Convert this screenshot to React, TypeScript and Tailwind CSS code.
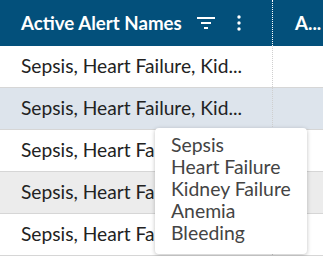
import React from "react";

const rows = [
  "bg-white",
  "bg-[#dde4ec]",
  "bg-white",
  "bg-[#ececec]",
  "bg-white",
];

export default function App() {
  return (
    <div className="relative w-[323px] h-[256px] overflow-hidden bg-white font-['Lato',sans-serif]">
      <div className="flex h-[46px] bg-[#03507b] text-white">
        <div className="flex items-center w-[273px] pl-[21px] border-r border-dotted border-white">
          <span className="text-[18.7px] font-bold whitespace-nowrap">Active Alert Names</span>
          <svg className="ml-[15px] shrink-0" width="18" height="14" viewBox="0 0 18 14">
            <rect x="0" y="1" width="18" height="2" fill="white" />
            <rect x="4" y="6" width="10" height="2" fill="white" />
            <rect x="7" y="11" width="4" height="2" fill="white" />
          </svg>
          <svg className="ml-[22px] shrink-0" width="4" height="16" viewBox="0 0 4 16">
            <circle cx="2" cy="2" r="1.7" fill="white" />
            <circle cx="2" cy="8" r="1.7" fill="white" />
            <circle cx="2" cy="14" r="1.7" fill="white" />
          </svg>
        </div>
        <div className="flex items-center pl-[22px] text-[18.7px] font-bold">A...</div>
      </div>
      {rows.map((bg, i) => (
        <div key={i} className={`flex h-[42px] border-b border-[#d6d6d6] ${bg}`}>
          <div className="flex items-center w-[273px] pl-[21px] border-r border-dotted border-[#cfcfcf] text-[19.2px] text-[#222] whitespace-nowrap">
            Sepsis, Heart Failure, Kid...
          </div>
          <div className="flex-1" />
        </div>
      ))}
      <div className="absolute left-[155px] top-[128px] w-[152px] h-[126px] bg-white rounded-[4px] shadow-[0_1px_4px_rgba(0,0,0,0.25)] pl-[16px] pt-[6px] text-[19.4px] leading-[22px] text-[#444] whitespace-nowrap">
        <div>Sepsis</div>
        <div>Heart Failure</div>
        <div>Kidney Failure</div>
        <div>Anemia</div>
        <div>Bleeding</div>
      </div>
    </div>
  );
}
